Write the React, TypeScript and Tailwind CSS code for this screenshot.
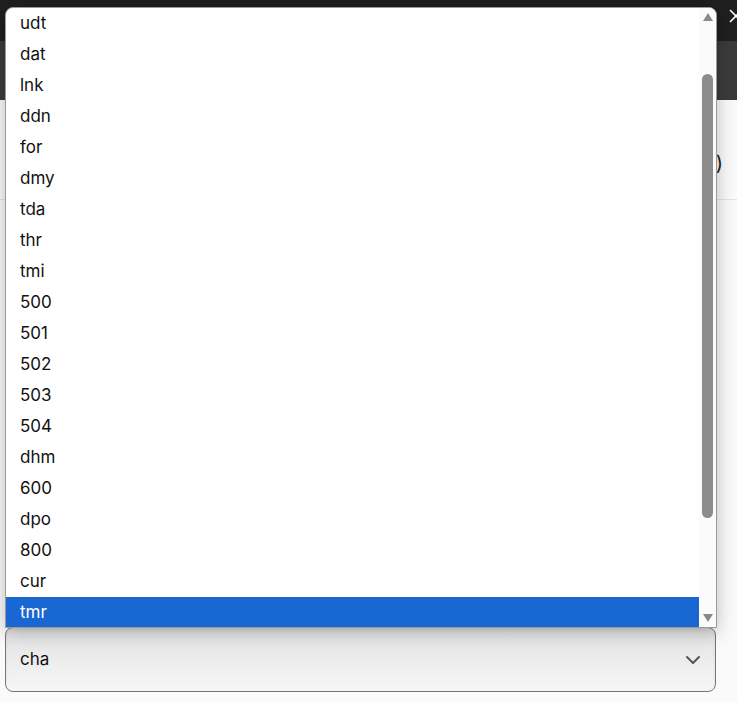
import { useState } from "react";

const OPTIONS = [
  "udt", "dat", "lnk", "ddn", "for", "dmy", "tda", "thr", "tmi", "500",
  "501", "502", "503", "504", "dhm", "600", "dpo", "800", "cur", "tmr",
];

export default function App() {
  const [selected] = useState("tmr");

  return (
    <div className="relative h-[702px] w-[737px] overflow-hidden bg-[#fafafa] font-['Inter','Noto_Sans',sans-serif] text-[#111]">
      {/* page behind */}
      <header className="flex h-[41px] items-start justify-end bg-[#1f1f1f]">
        <svg className="mt-[9px] -mr-[6px]" width="14" height="14" viewBox="0 0 14 14" fill="none">
          <path d="M1 1l12 12M13 1L1 13" stroke="#fff" strokeWidth="1.6" />
        </svg>
      </header>
      <div className="h-[59px] bg-[#3b3b3b]" />
      <div className="flex h-[100px] items-start justify-end border-b border-[#e4e4e4] bg-[#fafafa] pt-[49px] pr-[14px]">
        <span className="text-[20px] leading-[28px] text-[#222]">)</span>
      </div>

      <div className="pt-[427px] pr-[21px] pl-[5px]">
        <div className="flex h-[65px] items-center justify-between rounded-[8px] border border-[#767676] bg-gradient-to-b from-[#e3e3e3] to-[#f6f6f6] px-[14px] text-[17px] shadow-[inset_0_2px_4px_rgba(0,0,0,0.06)]">
          <span>cha</span>
          <svg width="16" height="10" viewBox="0 0 16 10" fill="none">
            <path d="M2 2l6 6 6-6" stroke="#555" strokeWidth="2" strokeLinecap="round" strokeLinejoin="round" />
          </svg>
        </div>
      </div>

      {/* open listbox */}
      <div className="absolute top-[7px] left-[5px] flex h-[621px] w-[712px] overflow-hidden rounded-t-[8px] border border-[#9a9a9a] bg-white shadow-[0_4px_18px_rgba(0,0,0,0.25)]">
        <ul className="flex-1">
          {OPTIONS.map((o) => (
            <li
              key={o}
              className={`flex h-[31px] items-center pl-[14px] text-[17px] ${
                o === selected ? "bg-[#1967d2] text-white" : "text-[#111]"
              }`}
            >
              {o}
            </li>
          ))}
        </ul>
        <div className="flex w-[17px] flex-col items-center bg-[#fbfbfb]">
          <svg className="mt-[4px]" width="12" height="10" viewBox="0 0 12 10">
            <path d="M6 1L11 9H1Z" fill="#8a8a8a" />
          </svg>
          <div className="mt-[52px] h-[444px] w-[11px] rounded-full bg-[#8c8c8c]" />
          <div className="flex-1" />
          <svg className="mb-[4px]" width="12" height="10" viewBox="0 0 12 10">
            <path d="M1 1H11L6 9Z" fill="#8a8a8a" />
          </svg>
        </div>
      </div>
    </div>
  );
}
